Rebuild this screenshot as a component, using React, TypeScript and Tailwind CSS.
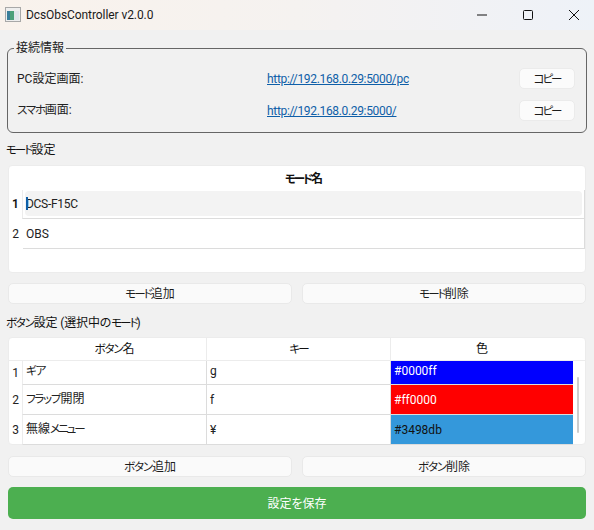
import React from 'react';

const fontStack = "font-['Roboto','Noto_Sans_CJK_JP',sans-serif] [font-feature-settings:'palt']";

// katakana in the reference font runs much narrower than Noto's
const K = ({ children }: { children: React.ReactNode }) => (
  <span className="text-[11.5px] tracking-[-2px]">{children}</span>
);
const L = ({ children }: { children: React.ReactNode }) => (
  <span className="text-[11.5px] tracking-[-1.2px]">{children}</span>
);

const AppIcon = () => (
  <svg width="16" height="16" viewBox="0 0 16 16" className="shrink-0">
    <rect x="0.5" y="0.5" width="15" height="14" fill="#eeeeee" stroke="#a8a8a8" />
    <rect x="2" y="4" width="3" height="9" fill="#3a7f9a" />
    <rect x="5" y="4" width="4" height="9" fill="#4ba07a" />
    <rect x="9" y="4" width="5" height="9" fill="#dfe6ea" />
  </svg>
);

const PlainButton = ({ children }: { children: React.ReactNode }) => (
  <button className="h-[21px] flex-1 rounded-[5px] border border-[#e9e9e9] bg-[#fafafa] pt-px text-[12px] leading-none text-[#1c1c1c]">
    {children}
  </button>
);

const CopyButton = () => (
  <button className="h-[21px] w-[56px] rounded-[5px] border border-[#ebebeb] bg-[#fbfbfb] pt-px text-[12px] leading-none text-[#1c1c1c]">
    <K>コピー</K>
  </button>
);

const LinkRow = ({ label, url }: { label: React.ReactNode; url: string }) => (
  <div className="flex h-[21px] items-center pl-[9px] pr-[11px]">
    <span className="w-[250px] text-[12px] text-[#222]">{label}</span>
    <a className="flex-1 text-[12px] tracking-[-0.33px] text-[#0f5fa8] underline">{url}</a>
    <CopyButton />
  </div>
);

const buttonRows = [
  { n: 1, name: <L>ギア</L>, key: 'g', color: '#0000ff', bg: 'bg-[#0000ff] text-white', h: 'h-[24px]', pb: 'pb-[3px]' },
  { n: 2, name: <><L>フラップ</L>開閉</>, key: 'f', color: '#ff0000', bg: 'bg-[#ff0000] text-white', h: 'h-[30px]', pb: 'pb-0' },
  { n: 3, name: <>無線<K>メニュー</K></>, key: '¥', color: '#3498db', bg: 'bg-[#3498db] text-[#111]', h: 'h-[30px]', pb: 'pb-0' },
];

export default function App() {
  return (
    <div className={`flex h-[530px] w-[594px] flex-col overflow-hidden bg-[#f1f1f1] ${fontStack}`}>
      {/* title bar */}
      <div className="flex h-[30px] shrink-0 items-center bg-gradient-to-r from-[#f9f2ec] via-[#f5f2f0] to-[#eef2f8] pl-[5px]">
        <AppIcon />
        <span className="ml-[5px] flex-1 text-[12px] tracking-[-0.08px] text-[#1a1a1a]">DcsObsController v2.0.0</span>
        <div className="flex items-center">
          <div className="flex h-[30px] w-[40px] items-center justify-center">
            <svg width="10" height="10" viewBox="0 0 10 10"><path d="M0 5h10" stroke="#111" strokeWidth="1" /></svg>
          </div>
          <div className="flex h-[30px] w-[52px] items-center justify-center">
            <svg width="10" height="10" viewBox="0 0 10 10"><rect x="0.5" y="0.5" width="9" height="9" rx="1" fill="none" stroke="#111" /></svg>
          </div>
          <div className="flex h-[30px] w-[40px] items-center justify-center">
            <svg width="10" height="10" viewBox="0 0 10 10"><path d="M0 0l10 10M10 0L0 10" stroke="#111" strokeWidth="1" /></svg>
          </div>
        </div>
      </div>

      <div className="flex flex-1 flex-col pl-[8px] pr-[8px]">
        {/* connection info */}
        <fieldset className="-mx-px mt-[10px] h-[93px] rounded-[6px] border border-[#666] pt-[12px]">
          <legend className="ml-[6px] px-[2px] text-[12px] leading-[16px] text-[#222]">接続情報</legend>
          <div className="flex flex-col gap-[11px]">
            <LinkRow label="PC設定画面:" url="http://192.168.0.29:5000/pc" />
            <LinkRow label={<><L>スマホ</L>画面:</>} url="http://192.168.0.29:5000/" />
          </div>
        </fieldset>

        <div className="-ml-[2px] mt-[8px] h-[18px] text-[12px] leading-[18px] text-[#111]"><K>モード</K>設定</div>

        {/* mode table */}
        <div className="mt-[6px] h-[108px] rounded-[4px] border border-[#ececec] bg-white">
          <div className="h-[24px] pl-[14px] pt-px text-center text-[12px] font-semibold leading-[24px] text-[#111]"><K>モード</K>名</div>
          <div className="flex h-[29px] items-stretch">
            <div className="flex w-[13px] items-center justify-center pb-[2px] text-[12px] font-semibold text-[#111]">1</div>
            <div className="flex flex-1 border-b border-l border-r border-[#dcdcdc] border-l-[#ececec] pb-[2px] pl-[2px] pr-[2px] pt-px">
              <div className="relative flex flex-1 items-center rounded-[4px] bg-[#f3f3f3] pl-[1px] text-[12px] tracking-[-0.3px] text-[#222]">
                <span className="absolute left-[1px] top-[6px] h-[13px] w-[2px] bg-[#0f5fa8]" />
                DCS-F15C
              </div>
            </div>
          </div>
          <div className="flex h-[30px] items-stretch">
            <div className="flex w-[13px] items-center justify-center text-[12px] text-[#222]">2</div>
            <div className="ml-px flex flex-1 items-center border-b border-r border-[#dcdcdc] pl-[3px] text-[12px] text-[#222]">OBS</div>
          </div>
        </div>

        <div className="mt-[10px] flex gap-[10px]">
          <PlainButton><K>モード</K>追加</PlainButton>
          <PlainButton><K>モード</K>削除</PlainButton>
        </div>

        <div className="-ml-[2px] mt-[10px] h-[18px] text-[12px] leading-[18px] tracking-[-0.15px] text-[#111]"><L>ボタン</L>設定 (選択中の<K>モード</K>)</div>

        {/* button table */}
        <div className="relative mt-[5px] h-[108px] rounded-[4px] border border-[#ececec] bg-white">
          <div className="flex h-[23px] border-b border-[#ececec] pr-[12px] text-center text-[12px] leading-[22px] text-[#111]">
            <div className="w-[198px] border-r border-[#ececec] pl-[14px]"><L>ボタン</L>名</div>
            <div className="w-[184px] border-r border-[#ececec]"><K>キー</K></div>
            <div className="w-[182px]">色</div>
          </div>
          {buttonRows.map((row) => (
            <div key={row.n} className={`flex pr-[12px] text-[12px] text-[#222] ${row.h}`}>
              <div className="flex w-[13px] items-center justify-center">{row.n}</div>
              <div className={`flex w-[185px] items-center border-b border-l border-r border-[#dcdcdc] border-l-[#ececec] pl-[3px] ${row.pb}`}><span>{row.name}</span></div>
              <div className={`flex w-[184px] items-center border-b border-r border-[#dcdcdc] pl-[3px] ${row.pb}`}>{row.key}</div>
              <div className={`flex w-[182px] items-center border-b border-[#dcdcdc] pl-[3px] ${row.pb} ${row.bg}`}>{row.color}</div>
            </div>
          ))}
          <div className="absolute right-[6px] top-[39px] h-[56px] w-[2px] rounded-full bg-[#cdcdcd]" />
        </div>

        <div className="mt-[11px] flex gap-[10px]">
          <PlainButton><L>ボタン</L>追加</PlainButton>
          <PlainButton><L>ボタン</L>削除</PlainButton>
        </div>

        <button className="mt-[10px] h-[32px] rounded-[5px] bg-[#4caf50] pt-px text-[12px] text-white">設定を保存</button>
      </div>
    </div>
  );
}
